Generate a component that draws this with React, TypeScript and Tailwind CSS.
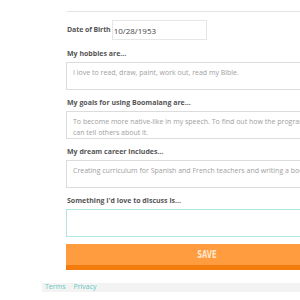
import React from 'react';

const fields = [
  { label: 'My hobbies are...', value: 'I love to read, draw, paint, work out, read my Bible.' },
  {
    label: 'My goals for using Boomalang are...',
    value: 'To become more native-like in my speech. To find out how the program can tell others about it.',
  },
  { label: 'My dream career includes...', value: 'Creating curriculum for Spanish and French teachers and writing a book.' },
];

const App: React.FC = () => {
  return (
    <div className="w-[300px] h-[300px] overflow-hidden bg-white font-['Open_Sans',sans-serif]">
      <div className="w-[282px] ml-[66px] pt-[11px]">
        <div className="border-t border-[#e2e2e2] ml-px" />

        <div className="flex items-center mt-[8px] h-[20px]">
          <span className="text-[7px] leading-[10px] font-bold text-[#555] ml-px tracking-[-0.1px]">Date of Birth</span>
          <input
            readOnly
            defaultValue="10/28/1953"
            className="ml-[1px] w-[95px] h-[20px] border border-[#e6e6e6] px-[1px] text-[8px] text-[#444] outline-none"
          />
        </div>

        <div className="mt-[9px]">
          {fields.map((f) => (
            <div key={f.label} className="mb-[8px]">
              <div className="text-[7px] leading-[10px] font-bold text-[#555] ml-px mb-[3px]">{f.label}</div>
              <textarea
                readOnly
                defaultValue={f.value}
                className="block w-full h-[28px] resize-none overflow-hidden border border-[#dcdcdc] pl-[6px] pr-[36px] py-[4px] text-[7px] leading-[11px] text-[#a0a0a0] outline-none"
              />
            </div>
          ))}

          <div className="mb-[7px]">
            <div className="text-[7px] leading-[10px] font-bold text-[#555] ml-px mb-[3px]">Something I'd love to discuss is...</div>
            <textarea
              readOnly
              className="block w-full h-[28px] resize-none overflow-hidden border border-[#aee9df] px-[6px] py-[4px] text-[7px] outline-none"
            />
          </div>
        </div>

        <button className="flex items-center justify-center w-full h-[26px] bg-[#ff9c40] border-b-[5px] border-[#f37c0c]">
          <span className="inline-block scale-x-[0.75] text-[#ffe6cc] text-[10px] font-bold font-['DejaVu_Sans_Condensed','DejaVu_Sans',sans-serif]">
            SAVE
          </span>
        </button>
      </div>

      <div className="ml-[42px] mt-[13px] h-[9px] bg-[#f3f3f3] flex items-center gap-[8px] pl-[3px] text-[7px] text-[#5fc9c2]">
        <span>Terms</span>
        <span>Privacy</span>
      </div>
    </div>
  );
};

export default App;
